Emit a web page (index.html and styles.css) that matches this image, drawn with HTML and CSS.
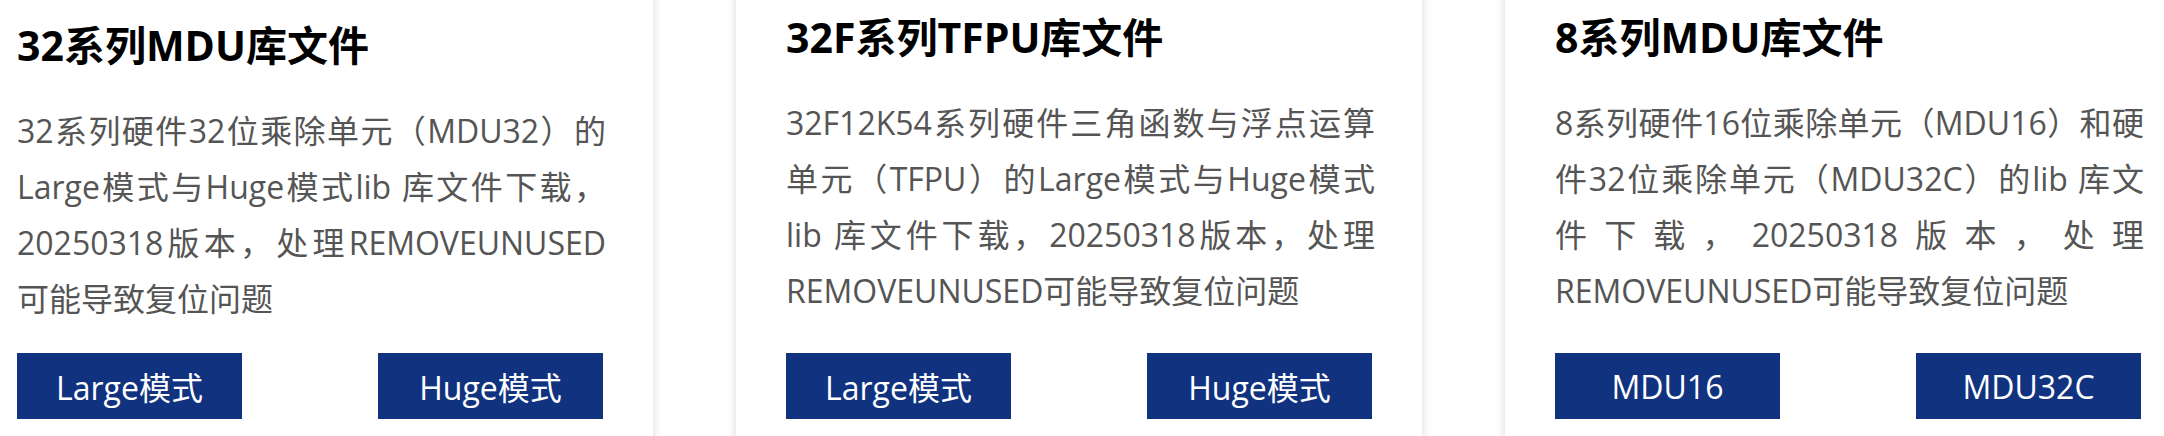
FILE: index.html
```html
<!DOCTYPE html>
<html lang="zh-CN">
<head>
    <meta charset="UTF-8">
    <meta name="viewport" content="width=device-width, initial-scale=1.0">
    <title>库文件下载</title>
    <link rel="stylesheet" href="styles.css">
</head>
<body>
    <div class="lib-list">
        <div class="track">
            <div class="card card-offset">
                <div class="card-body">
                    <h3>32系列MDU库文件</h3>
                    <p>32系列硬件32位乘除单元（MDU32）的Large模式与Huge模式lib 库文件下载，20250318版本，处理REMOVEUNUSED可能导致复位问题</p>
                </div>
                <div class="card-actions">
                    <a class="btn" href="#">Large模式</a>
                    <a class="btn" href="#">Huge模式</a>
                </div>
            </div>

            <div class="card">
                <div class="card-body">
                    <h3>32F系列TFPU库文件</h3>
                    <p>32F12K54系列硬件三角函数与浮点运算单元（TFPU）的Large模式与Huge模式lib 库文件下载，20250318版本，处理REMOVEUNUSED可能导致复位问题</p>
                </div>
                <div class="card-actions">
                    <a class="btn" href="#">Large模式</a>
                    <a class="btn" href="#">Huge模式</a>
                </div>
            </div>

            <div class="card">
                <div class="card-body">
                    <h3>8系列MDU库文件</h3>
                    <p>8系列硬件16位乘除单元（MDU16）和硬件32位乘除单元（MDU32C）的lib 库文件下载，20250318版本，处理REMOVEUNUSED可能导致复位问题</p>
                </div>
                <div class="card-actions">
                    <a class="btn" href="#">MDU16</a>
                    <a class="btn" href="#">MDU32C</a>
                </div>
            </div>
        </div>
    </div>
</body>
</html>
```

FILE: styles.css
```css
html, body {
    margin: 0;
    padding: 0;
    background-color: #fff;
    overflow: hidden;
}
body {
    font-family: "Open Sans", "Noto Sans CJK SC", sans-serif;
}
.lib-list {
    height: 436px;
    overflow: hidden;
}
.track {
    display: flex;
    gap: 83px;
    margin-left: -33px;
    margin-top: -20px;
}
.card {
    flex: 0 0 686px;
    box-sizing: border-box;
    padding: 29px 50px 60px;
    background-color: #fff;
    box-shadow: 0 0 9px rgba(0,0,0,0.16);
    display: flex;
    flex-direction: column;
}
.card-body {
    flex: 1;
}
.card-offset .card-body {
    padding-top: 8px;
}
.card h3 {
    margin: 0;
    font-size: 41px;
    line-height: 56px;
    font-weight: 700;
    color: #000;
}
.card p {
    margin: 30px -3px 0 0;
    font-size: 32px;
    line-height: 56px;
    color: #555;
    text-align: justify;
}
.card-actions {
    display: flex;
    justify-content: space-between;
    margin-top: 26px;
}
.btn {
    width: 225px;
    height: 66px;
    display: flex;
    align-items: center;
    justify-content: center;
    background-color: #10327f;
    color: #fff;
    font-size: 32px;
    text-decoration: none;
}
```
